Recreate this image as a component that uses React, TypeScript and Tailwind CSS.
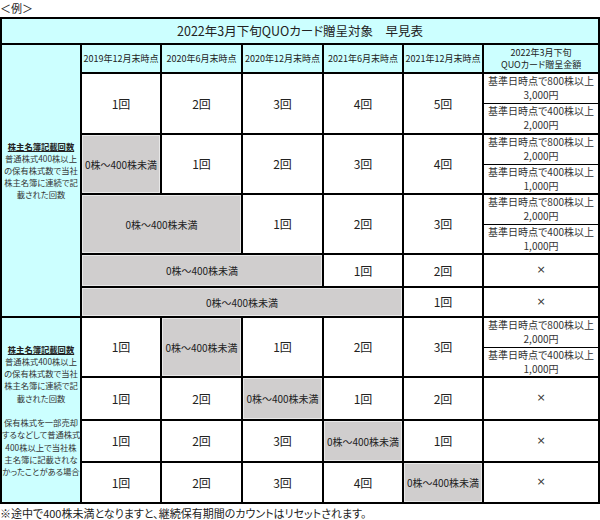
const font = "font-['Noto_Sans_CJK_JP','Noto_Sans',sans-serif] [font-feature-settings:'palt']";

const cyan = 'border-2 border-black bg-[#ccffff] text-center text-[#222]';
const cnt = 'border-2 border-black bg-white text-center text-[12px] text-[#222]';
const gray = 'border-2 border-black bg-[#d0cece] text-center text-[10px] text-[#222] shadow-[inset_0_0_0_1px_#e8e8e8]';
const cross = "border-2 border-black bg-white text-center text-[11px] text-[#333] font-['DejaVu_Sans',sans-serif]";
const subTop = 'border-x-2 border-t-2 border-b border-black bg-white text-center text-[10px] leading-[14px] text-[#333]';
const subBot = 'border-x-2 border-b-2 border-t border-black bg-white text-center text-[10px] leading-[14px] text-[#333]';
const label = `${cyan} px-0 text-[8.3px] text-[#333] whitespace-nowrap`;

function Sub({ shares, yen, top }: { shares: string; yen: string; top?: boolean }) {
  return (
    <td className={top ? subTop : subBot}>
      基準日時点で{shares}株以上
      <br />
      {yen}円
    </td>
  );
}

function Gray({ span = 1 }: { span?: number }) {
  return (
    <td colSpan={span} className={gray}>
      0株～400株未満
    </td>
  );
}

function Cnt({ n, rows = 1 }: { n: number; rows?: number }) {
  return (
    <td rowSpan={rows} className={cnt}>
      {n}回
    </td>
  );
}

function Cross() {
  return <td className={cross}>×</td>;
}

const headers = ['2019年12月末時点', '2020年6月末時点', '2020年12月末時点', '2021年6月末時点', '2021年12月末時点'];

export default function App() {
  return (
    <div className={`w-[600px] h-[520px] bg-white ${font}`}>
      <div className="h-[17px] text-[11px] leading-[16px] text-[#222]">＜例＞</div>

      <table className="w-[600px] table-fixed border-collapse">
        <colgroup>
          <col className="w-[80px]" />
          <col className="w-[80px]" />
          <col className="w-[81px]" />
          <col className="w-[81px]" />
          <col className="w-[80px]" />
          <col className="w-[80px]" />
          <col className="w-[116px]" />
        </colgroup>
        <tbody>
          {/* title */}
          <tr className="h-[26px]">
            <td colSpan={7} className={`${cyan} text-[12.5px]`}>
              2022年3月下旬QUOカード贈呈対象　早見表
            </td>
          </tr>

          {/* header */}
          <tr className="h-[29px]">
            <td rowSpan={9} className={`${label} pb-[22px] leading-[12px]`}>
              <span className="font-bold underline text-[#222]">株主名簿記載回数</span>
              <br />
              普通株式400株以上
              <br />
              の保有株式数で当社
              <br />
              株主名簿に連続で記
              <br />
              載された回数
            </td>
            {headers.map((h) => (
              <td key={h} className={`${cyan} px-0 text-[9px] whitespace-nowrap`}>
                {h}
              </td>
            ))}
            <td className={`${cyan} text-[9px] leading-[12px]`}>
              2022年3月下旬
              <br />
              QUOカード贈呈金額
            </td>
          </tr>

          {/* row 1 */}
          <tr className="h-[30px]">
            <Cnt n={1} rows={2} />
            <Cnt n={2} rows={2} />
            <Cnt n={3} rows={2} />
            <Cnt n={4} rows={2} />
            <Cnt n={5} rows={2} />
            <Sub top shares="800" yen="3,000" />
          </tr>
          <tr className="h-[31px]">
            <Sub shares="400" yen="2,000" />
          </tr>

          {/* row 2 */}
          <tr className="h-[30px]">
            <td rowSpan={2} className={gray}>
              0株～400株未満
            </td>
            <Cnt n={1} rows={2} />
            <Cnt n={2} rows={2} />
            <Cnt n={3} rows={2} />
            <Cnt n={4} rows={2} />
            <Sub top shares="800" yen="2,000" />
          </tr>
          <tr className="h-[30px]">
            <Sub shares="400" yen="1,000" />
          </tr>

          {/* row 3 */}
          <tr className="h-[30px]">
            <td rowSpan={2} colSpan={2} className={gray}>
              0株～400株未満
            </td>
            <Cnt n={1} rows={2} />
            <Cnt n={2} rows={2} />
            <Cnt n={3} rows={2} />
            <Sub top shares="800" yen="2,000" />
          </tr>
          <tr className="h-[30px]">
            <Sub shares="400" yen="1,000" />
          </tr>

          {/* row 4 */}
          <tr className="h-[33px]">
            <Gray span={3} />
            <Cnt n={1} />
            <Cnt n={2} />
            <Cross />
          </tr>

          {/* row 5 */}
          <tr className="h-[30px]">
            <Gray span={4} />
            <Cnt n={1} />
            <Cross />
          </tr>

          {/* row 6 */}
          <tr className="h-[30px]">
            <td rowSpan={5} className={`${label} leading-[12.2px]`}>
              <span className="font-bold underline text-[#222]">株主名簿記載回数</span>
              <br />
              普通株式400株以上
              <br />
              の保有株式数で当社
              <br />
              株主名簿に連続で記
              <br />
              載された回数
              <br />
              <br />
              保有株式を一部売却
              <br />
              するなどして普通株式
              <br />
              400株以上で当社株
              <br />
              主名簿に記載されな
              <br />
              かったことがある場合
            </td>
            <Cnt n={1} rows={2} />
            <td rowSpan={2} className={gray}>
              0株～400株未満
            </td>
            <Cnt n={1} rows={2} />
            <Cnt n={2} rows={2} />
            <Cnt n={3} rows={2} />
            <Sub top shares="800" yen="2,000" />
          </tr>
          <tr className="h-[30px]">
            <Sub shares="400" yen="1,000" />
          </tr>

          {/* row 7 */}
          <tr className="h-[43px]">
            <Cnt n={1} />
            <Cnt n={2} />
            <Gray />
            <Cnt n={1} />
            <Cnt n={2} />
            <Cross />
          </tr>

          {/* row 8 */}
          <tr className="h-[42px]">
            <Cnt n={1} />
            <Cnt n={2} />
            <Cnt n={3} />
            <Gray />
            <Cnt n={1} />
            <Cross />
          </tr>

          {/* row 9 */}
          <tr className="h-[41px]">
            <Cnt n={1} />
            <Cnt n={2} />
            <Cnt n={3} />
            <Cnt n={4} />
            <Gray />
            <Cross />
          </tr>
        </tbody>
      </table>

      <p className="mt-[2px] text-[11px] leading-[14px] text-[#222]">
        ※途中で400株未満となりますと、継続保有期間のカウントはリセットされます。
      </p>
    </div>
  );
}
